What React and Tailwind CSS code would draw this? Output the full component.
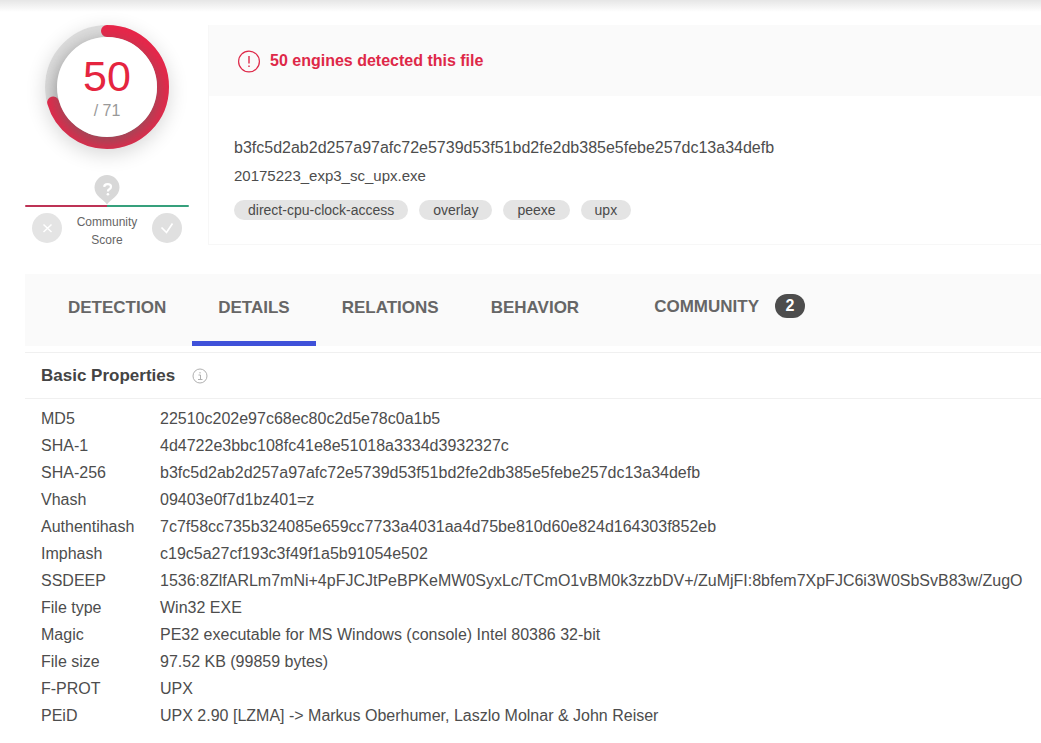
const tags = ["direct-cpu-clock-access", "overlay", "peexe", "upx"];

const tabs = [
  { name: "DETECTION" },
  { name: "DETAILS", active: true },
  { name: "RELATIONS" },
  { name: "BEHAVIOR" },
];

const properties = [
  ["MD5", "22510c202e97c68ec80c2d5e78c0a1b5"],
  ["SHA-1", "4d4722e3bbc108fc41e8e51018a3334d3932327c"],
  ["SHA-256", "b3fc5d2ab2d257a97afc72e5739d53f51bd2fe2db385e5febe257dc13a34defb"],
  ["Vhash", "09403e0f7d1bz401=z"],
  ["Authentihash", "7c7f58cc735b324085e659cc7733a4031aa4d75be810d60e824d164303f852eb"],
  ["Imphash", "c19c5a27cf193c3f49f1a5b91054e502"],
  ["SSDEEP", "1536:8ZlfARLm7mNi+4pFJCJtPeBPKeMW0SyxLc/TCmO1vBM0k3zzbDV+/ZuMjFI:8bfem7XpFJC6i3W0SbSvB83w/ZugO"],
  ["File type", "Win32 EXE"],
  ["Magic", "PE32 executable for MS Windows (console) Intel 80386 32-bit"],
  ["File size", "97.52 KB (99859 bytes)"],
  ["F-PROT", "UPX"],
  ["PEiD", "UPX 2.90 [LZMA] -> Markus Oberhumer, Laszlo Molnar & John Reiser"],
];

function ScoreRing({ positives, total }) {
  const length = 2 * Math.PI * 56;
  return (
    <div className="relative size-[124px] rounded-full shadow-[0_5px_20px_rgba(0,0,0,0.16)]">
      <svg viewBox="0 0 124 124" className="size-full" aria-hidden="true">
        <circle cx="62" cy="62" r="56" fill="none" stroke="#dedede" strokeWidth="12" />
        <circle
          cx="62"
          cy="62"
          r="56"
          fill="none"
          stroke="#eb2549"
          strokeWidth="12"
          strokeLinecap="round"
          strokeDasharray={`${(length * positives) / total} ${length}`}
          transform="rotate(-90 62 62)"
        />
      </svg>
      {/* the shadow of the white disc falls on the ring, clipped to it */}
      <div className="absolute inset-0 overflow-hidden rounded-full p-3">
        <div className="flex size-full flex-col items-center rounded-full bg-white pt-4 shadow-[0_6px_20px_rgba(100,100,100,0.75)]">
          <span className="text-[43px] leading-[46px] text-[#e5253f]">{positives}</span>
          <span className="text-base leading-6 text-[#999]">/ {total}</span>
        </div>
      </div>
    </div>
  );
}

function CommunityScore() {
  return (
    <div className="mt-[25px] w-full">
      <svg viewBox="0 0 26 30" className="mx-auto h-[31px] w-[26px]" aria-hidden="true">
        <path d="M13 30 C10 25 .5 22 .5 13 A12.5 12.5 0 0 1 25.5 13 C25.5 22 16 25 13 30Z" fill="#d8d8d8" />
        <path d="M10.200 12.300 Q10.400 9.700 13.500 9.700 Q17 9.700 17 12.200 Q17 13.700 15.300 14.700 Q13.900 15.500 13.900 17" fill="none" stroke="#fff" strokeWidth="2.200" />
        <circle cx="13.900" cy="19.800" r="1.300" fill="#fff" />
      </svg>
      <div className="flex h-0.5 overflow-hidden rounded-full">
        <div className="flex-1 bg-[#bd3355]" />
        <div className="flex-1 bg-[#36a07c]" />
      </div>
      <div className="flex justify-between px-[7px] pt-1.5">
        <button aria-label="Vote harmful" className="size-[30px] rounded-full bg-[#e4e4e4]">
          <svg viewBox="0 0 30 30" fill="none" stroke="#fff" strokeWidth="1.500">
            <path d="M11.500 11.500l8 7.500M19.500 11.500l-8 7.500" />
          </svg>
        </button>
        <p className="text-center text-xs leading-[18px] text-[#666]">
          Community
          <br />
          Score
        </p>
        <button aria-label="Vote harmless" className="size-[30px] rounded-full bg-[#e0e0e0]">
          <svg viewBox="0 0 30 30" fill="none" stroke="#fff" strokeWidth="1.700">
            <path d="M9.500 14.500l5 5 6-9" />
          </svg>
        </button>
      </div>
    </div>
  );
}

function Summary() {
  return (
    <div className="flex items-start gap-[19px] pl-[25px]">
      <aside className="flex w-[164px] shrink-0 flex-col items-center">
        <ScoreRing positives={50} total={71} />
        <CommunityScore />
      </aside>
      <section className="min-w-0 flex-1 border-b border-l border-[#f7f7f7] pb-6">
        <div className="flex h-[71px] items-center gap-[9px] bg-[#fafafa] pl-7 text-[#de2848]">
          <svg viewBox="0 0 24 24" className="size-6" fill="none" stroke="currentColor" strokeWidth="1.200" aria-hidden="true">
            <circle cx="12" cy="12.500" r="10.400" />
            <path d="M12 7v7.500M12 16.500v1.500" strokeWidth="1.400" />
          </svg>
          <h1 className="text-base font-bold">50 engines detected this file</h1>
        </div>
        <div className="pt-[38px] pl-[25px] text-[#4d4d4d]">
          <p className="text-base leading-7 break-all">b3fc5d2ab2d257a97afc72e5739d53f51bd2fe2db385e5febe257dc13a34defb</p>
          <p className="text-[15px] leading-7">20175223_exp3_sc_upx.exe</p>
          <ul className="mt-2.5 flex flex-wrap gap-[11px]">
            {tags.map((tag) => (
              <li key={tag}>
                <a href="#" className="block rounded-full bg-[#e4e4e4] px-3.5 text-sm leading-5 text-[#4a4a4a]">
                  {tag}
                </a>
              </li>
            ))}
          </ul>
        </div>
      </section>
    </div>
  );
}

function Tabs() {
  return (
    <nav className="mt-[25px] ml-[25px] flex h-[72px] bg-[#fafafa] pl-[17px] text-[17px] font-bold text-[#666]">
      {tabs.map((tab) => (
        <a
          key={tab.name}
          href="#"
          className={
            tab.active
              ? "border-b-[5px] border-[#3f51d9] px-[26px] pt-5 leading-7"
              : "px-[26px] pt-5 leading-7"
          }
        >
          {tab.name}
        </a>
      ))}
      <a href="#" className="ml-[23px] flex items-start gap-4 px-[26px] pt-5 leading-[26px]">
        COMMUNITY
        <span className="h-6 w-[30px] rounded-full bg-[#4d4d4d] text-center text-base leading-6 text-white">2</span>
      </a>
    </nav>
  );
}

function BasicProperties() {
  return (
    <section className="mt-1.5 ml-[25px]">
      <div className="flex h-[47px] items-center gap-[17px] border-y border-[#f0f0f0] pl-4">
        <h2 className="text-[17px] leading-6 font-bold text-[#444]">Basic Properties</h2>
        <svg viewBox="0 0 16 16" className="size-4" fill="none" stroke="#b0b0b0" aria-hidden="true">
          <circle cx="8" cy="8" r="7" />
          <path d="M6.500 7H8.500V11.500M6 11.500H10.500M8 4V5.500" />
        </svg>
      </div>
      <table className="mt-1.5 w-full text-left text-base text-[#4d4d4d]">
        <tbody>
          {properties.map(([label, value]) => (
            <tr key={label}>
              <th scope="row" className="w-[135px] p-0 pl-4 align-top leading-[27px] font-normal">
                {label}
              </th>
              <td className="p-0 leading-[27px] break-all">{value}</td>
            </tr>
          ))}
        </tbody>
      </table>
    </section>
  );
}

export default function App() {
  return (
    <main className="overflow-x-hidden bg-white pb-3 font-['Liberation_Sans',Arial,sans-serif]">
      <div className="mb-[13px] h-3 bg-gradient-to-b from-[#e6e6e6] to-white" />
      <Summary />
      <Tabs />
      <BasicProperties />
    </main>
  );
}
